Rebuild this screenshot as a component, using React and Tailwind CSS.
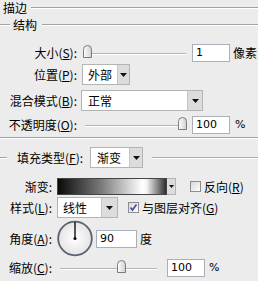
import React from "react";

const Line = ({ className = "" }) => (
  <div className={`h-[2px] border-t border-b border-t-[#a3a3a3] border-b-white ${className}`} />
);

const Thumb = ({ className = "" }) => (
  <svg className={`absolute ${className}`} width="9" height="13" viewBox="0 0 9 13">
    <defs>
      <linearGradient id="tg" x1="0" x2="1" y1="0" y2="0">
        <stop offset="0" stopColor="#ffffff" />
        <stop offset="1" stopColor="#cfcfcf" />
      </linearGradient>
    </defs>
    <path d="M0.5 4.5 Q0.5 0.5 4.5 0.5 Q8.5 0.5 8.5 4.5 V12.5 H0.5 Z" fill="url(#tg)" stroke="#7b7b7b" />
  </svg>
);

const Track = ({ className = "" }) => (
  <div className={`absolute top-[9px] h-[2px] border-t border-b border-t-[#b3b3b3] border-b-white ${className}`} />
);

const Arrow = ({ className = "" }) => (
  <div className={`h-full flex items-center justify-center bg-[#dcdcdc] border-l border-[#c4c4c4] ${className}`}>
    <svg width="7" height="4" viewBox="0 0 7 4">
      <path d="M0 0 H7 L3.5 4 Z" fill="#111" />
    </svg>
  </div>
);

const Num = "font-['DejaVu_Sans',sans-serif] text-[11px]";

const Input = ({ value, className = "" }) => (
  <div className={`bg-white border border-[#abb0b8] flex items-center pl-[3px] ${Num} ${className}`}>{value}</div>
);

const Check = ({ checked }) => (
  <div className="w-[11px] h-[11px] border border-[#8d8d8d] bg-[linear-gradient(135deg,#d8d8d8,#ffffff)] flex items-center justify-center">
    {checked && (
      <svg width="9" height="9" viewBox="0 0 9 9">
        <path d="M1.5 4.5 L3.5 7 L7.5 1.5" fill="none" stroke="#4b4ba8" strokeWidth="1.7" />
      </svg>
    )}
  </div>
);

export default function App() {
  return (
    <div className="w-[258px] h-[281px] bg-[#ececec] relative overflow-hidden text-[12px] leading-[14px] whitespace-nowrap text-black font-['Noto_Sans_CJK_SC',sans-serif]">
      {/* title */}
      <div className="flex items-center h-[13px] mt-[1px] pl-[3px] leading-[13px]">
        <span>描边</span>
        <Line className="flex-1 ml-[4px]" />
      </div>
      {/* group 结构 */}
      <div className="flex items-center h-[14px] mt-[4px]">
        <Line className="w-[10px]" />
        <span className="ml-[3px]">结构</span>
        <Line className="flex-1 ml-[5px]" />
      </div>

      {/* 大小 */}
      <div className="flex items-center h-[18px] mt-[12px]">
        <div className="w-[77px] text-right">大小(<span className="underline">S</span>):</div>
        <div className="relative w-[107px] h-[18px] ml-[5px]">
          <Track className="left-[4px] right-[3px]" />
          <Thumb className="left-[1px] top-[1px]" />
        </div>
        <Input value="1" className="ml-[3px] w-[38px] h-[18px]" />
        <span className="ml-[3px]">像素</span>
      </div>

      {/* 位置 */}
      <div className="flex items-center h-[21px] mt-[2px]">
        <div className="w-[77px] text-right">位置(<span className="underline">P</span>):</div>
        <div className="ml-[5px] w-[48px] h-[21px] bg-white border border-[#b4b4b4] flex">
          <div className="flex-1 flex items-center pl-[5px]">外部</div>
          <Arrow className="w-[12px]" />
        </div>
      </div>

      {/* 混合模式 */}
      <div className="flex items-center h-[21px] mt-[5px]">
        <div className="w-[77px] text-right">混合模式(<span className="underline">B</span>):</div>
        <div className="ml-[4px] w-[122px] h-[21px] bg-white border border-[#b4b4b4] flex">
          <div className="flex-1 flex items-center pl-[6px]">正常</div>
          <Arrow className="w-[15px]" />
        </div>
      </div>

      {/* 不透明度 */}
      <div className="flex items-center h-[18px] mt-[5px]">
        <div className="w-[77px] text-right">不透明度(<span className="underline">O</span>):</div>
        <div className="relative w-[107px] h-[18px] ml-[5px]">
          <Track className="left-[3px] right-[4px]" />
          <Thumb className="left-[96px] top-[1px]" />
        </div>
        <Input value="100" className="ml-[3px] w-[38px] h-[18px]" />
        <span className={`ml-[5px] ${Num}`}>%</span>
      </div>

      {/* divider */}
      <Line className="w-full mt-[3px]" />

      {/* 填充类型 */}
      <div className="flex items-center h-[21px] mt-[8px]">
        <Line className="w-[7px]" />
        <div className="ml-[10px] w-[66px]">填充类型(<span className="underline">F</span>):</div>
        <div className="ml-[7px] w-[53px] h-[21px] bg-white border border-[#b4b4b4] flex">
          <div className="flex-1 flex items-center pl-[6px]">渐变</div>
          <Arrow className="w-[13px]" />
        </div>
        <div className="flex-1 ml-[9px] h-[2px] border-t border-b border-t-[#a9a9bb] border-b-white" />
      </div>

      {/* 渐变 */}
      <div className="flex items-center h-[17px] mt-[10px]">
        <div className="w-[52px] text-right">渐变:</div>
        <div className="ml-[5px] h-[17px] flex">
          <div className="w-[110px] h-full border border-[#444] bg-[linear-gradient(to_right,#0a0a0a_0%,#7a7a7a_40%,#ffffff_78%,#f4f4f4_82%,#2e2e2e_100%)]" />
          <div className="w-[9px] h-full bg-[#dcdcdc] border border-l-0 border-[#b4b4b4] flex items-center justify-center">
            <svg width="5" height="3" viewBox="0 0 5 3"><path d="M0 0 H5 L2.5 3 Z" fill="#111" /></svg>
          </div>
        </div>
        <div className="ml-[14px]"><Check /></div>
        <span className="ml-[3px]">反向(<span className="underline">R</span>)</span>
      </div>

      {/* 样式 */}
      <div className="flex items-center h-[21px] mt-[2px]">
        <div className="w-[52px] text-right">样式(<span className="underline">L</span>):</div>
        <div className="ml-[5px] w-[61px] h-[21px] bg-white border border-[#b4b4b4] flex">
          <div className="flex-1 flex items-center pl-[5px]">线性</div>
          <Arrow className="w-[16px]" />
        </div>
        <div className="ml-[10px]"><Check checked /></div>
        <span className="ml-[3px]">与图层对齐(<span className="underline">G</span>)</span>
      </div>

      {/* 角度 */}
      <div className="flex items-center h-[37px] mt-[2px]">
        <div className="w-[52px] text-right">角度(<span className="underline">A</span>):</div>
        <svg className="ml-[5px]" width="36" height="37" viewBox="0 0 36 37">
          <defs>
            <radialGradient id="dg" cx="0.5" cy="0.5" r="0.5">
              <stop offset="0" stopColor="#ffffff" />
              <stop offset="1" stopColor="#e4e4e4" />
            </radialGradient>
          </defs>
          <circle cx="18" cy="18.5" r="16.8" fill="url(#dg)" stroke="#5a6272" strokeWidth="1.8" />
          <line x1="18" y1="2" x2="18" y2="18.5" stroke="#111" strokeWidth="1.4" />
          <circle cx="18" cy="18.5" r="1.6" fill="#111" />
        </svg>
        <Input value="90" className="ml-[3px] w-[41px] h-[18px]" />
        <span className="ml-[3px]">度</span>
      </div>

      {/* 缩放 */}
      <div className="flex items-center h-[18px] mt-[2px]">
        <div className="w-[52px] text-right">缩放(<span className="underline">C</span>):</div>
        <div className="relative w-[103px] h-[18px] ml-[5px]">
          <Track className="left-[3px] right-[3px]" />
          <Thumb className="left-[60px] top-[1px]" />
        </div>
        <Input value="100" className="ml-[7px] w-[38px] h-[18px]" />
        <span className={`ml-[4px] ${Num}`}>%</span>
      </div>
    </div>
  );
}
